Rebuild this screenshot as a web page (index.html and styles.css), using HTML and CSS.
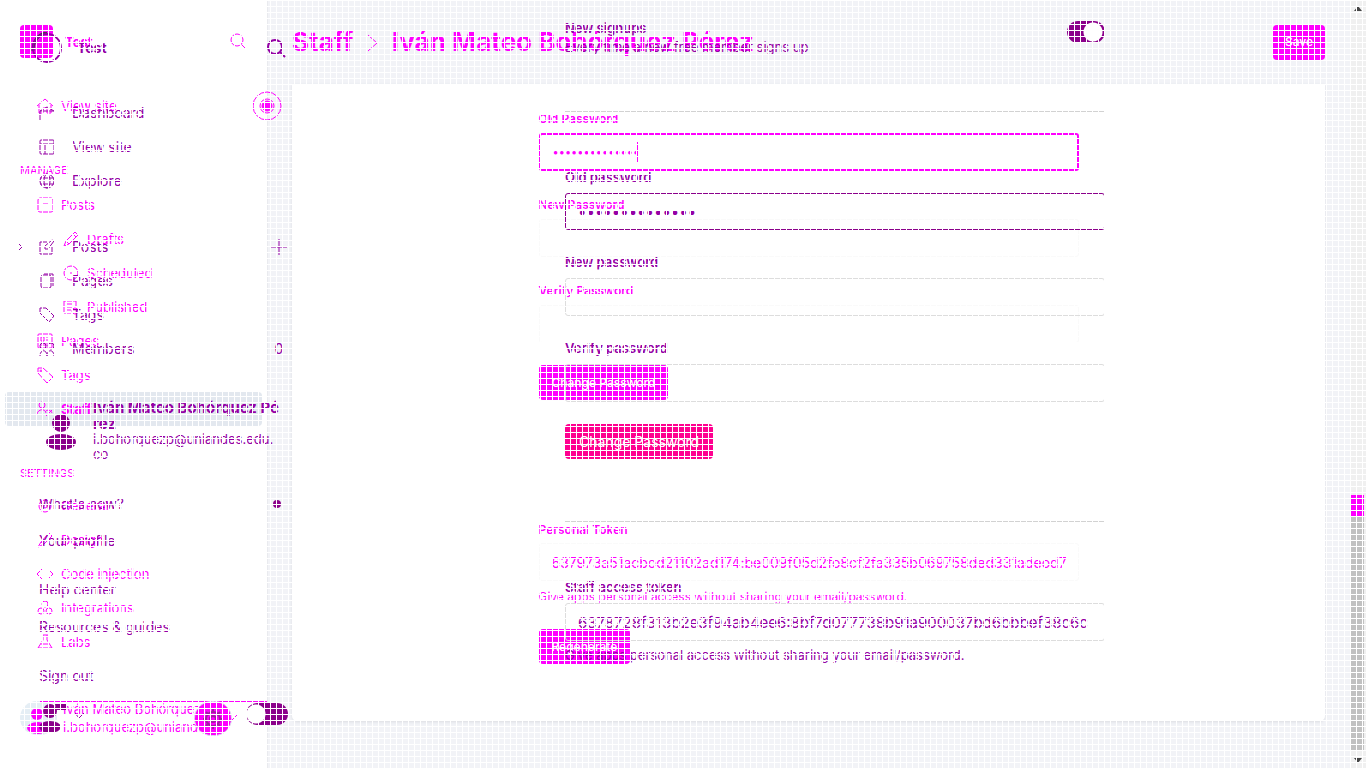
FILE: index.html
```
<!DOCTYPE html>
<html lang="en">
<head>
<meta charset="utf-8">
<title>Staff – Iván Mateo Bohórquez Pérez</title>
<link rel="stylesheet" href="styles.css">
</head>
<body>
<div class="stage">
  <div class="layer before">
    <aside class="side">
      <div class="brand"><span class="brand-mark"></span><b>Test</b>
        <button class="plain search" aria-label="Search"><svg width="17" height="17" viewBox="0 0 17 17"><circle cx="7" cy="7" r="6"/><path d="M11.500 11.500 16 16"/></svg></button></div>
      <nav class="nav">
        <a href="#" class="item first"><svg class="ic" viewBox="0 0 16 16"><path d="M0 8 8 1l8 7M2 7v8h4v-5h4v5h4V7"/></svg>View site<svg class="globe" viewBox="0 0 30 30"><circle cx="15" cy="15" r="14"/><circle class="fill" cx="15" cy="15" r="5"/><circle cx="15" cy="15" r="7"/></svg></a>
        <h2 class="group manage">MANAGE</h2>
        <a href="#" class="item posts"><svg class="ic" viewBox="0 0 16 16"><rect x="1" y="1" width="15" height="14" rx="2"/><path d="M5 7h7"/></svg>Posts</a>
        <a href="#" class="item sub"><svg class="ic" viewBox="0 0 16 16"><path d="m1 15 2-5 9-9 3 3-9 9zM10 3l3 3M3 10l3 3"/></svg>Drafts</a>
        <a href="#" class="item sub"><svg class="ic" viewBox="0 0 16 16"><circle cx="8" cy="8" r="7"/><path d="M7 8h2"/></svg>Scheduled</a>
        <a href="#" class="item sub"><svg class="ic" viewBox="0 0 16 16"><path d="M13 8V2H1v12h7M4 5h6M4 8h5M4 11h4"/><circle cx="12" cy="12" r="3"/></svg>Published</a>
        <a href="#" class="item"><svg class="ic" viewBox="0 0 16 16"><rect x="1" y="1" width="14" height="14" rx="1"/><path d="M4 4h3v4H4zM9 4h3M9 7h3M4 10h8M4 12h8"/></svg>Pages</a>
        <a href="#" class="item"><svg class="ic" viewBox="0 0 16 16"><path d="M1 1h5l10 9-6 6L1 6z"/><circle cx="4" cy="4" r="1"/></svg>Tags</a>
        <a href="#" class="item active"><svg class="ic" viewBox="0 0 16 16"><circle cx="5" cy="4" r="3"/><path d="M0 13c1-5 8-6 9-1M8 11c2-3 6-2 7 1M9 15l6-6"/></svg>Staff</a>
        <h2 class="group settings">SETTINGS</h2>
        <a href="#" class="item"><svg class="ic" viewBox="0 0 16 16"><circle cx="8" cy="8" r="6"/><circle cx="8" cy="8" r="2"/></svg>General</a>
        <a href="#" class="item"><svg class="ic" viewBox="0 0 16 16"><path d="m1 15 3-5 8-9 3 3-8 8zM4 10l3 3"/></svg>Design</a>
        <a href="#" class="item"><svg class="ic" viewBox="0 0 16 16"><path d="M5 3 0 8l5 5M11 3l5 5-5 5"/></svg>Code injection</a>
        <a href="#" class="item"><svg class="ic" viewBox="0 0 16 16"><circle cx="8" cy="4" r="3"/><circle cx="4" cy="11" r="3"/><circle cx="12" cy="11" r="3"/></svg>Integrations</a>
        <a href="#" class="item"><svg class="ic" viewBox="0 0 16 16"><path d="M5 1h6M6 1v5L1 14h14l-5-8V1M4 10h8"/></svg>Labs</a>
      </nav>
      <div class="account">
        <span class="avatar"><svg width="36" height="33" viewBox="0 0 36 33"><circle cx="17" cy="13" r="6"/><ellipse cx="18" cy="27" rx="11" ry="6"/></svg></span>
        <div class="who">Iván Mateo Bohórquez<br>i.bohorquezp@uniandes.e</div>
        <button class="gear" aria-label="Settings"><svg width="20" height="20" viewBox="0 0 20 20"><circle cx="10" cy="10" r="7"/><circle cx="10" cy="10" r="3"/><path d="M10 0v4M10 16v4M0 10h4M16 10h4M3 3l3 3M14 14l3 3M17 3l-3 3M6 14l-3 3"/></svg></button>
        <svg class="down" width="12" height="8" viewBox="0 0 12 8"><path d="m1 1 4 5 5-5"/></svg>
      </div>
    </aside>
    <main class="main">
      <header class="top"><h1>Staff <svg width="14" height="20" viewBox="0 0 14 20"><path d="m2 2 9 8-9 8"/></svg> Iván Mateo Bohórquez Pérez</h1><button class="btn save">Save</button></header>
      <section class="panel"><form class="form">
        <label for="a1">Old Password</label>
        <div class="focus"><input class="field on" id="a1" type="password" value="abcdefghijklmn"><i class="caret"></i></div>
        <label for="a2">New Password</label><input class="field" id="a2" type="password">
        <label for="a3">Verify Password</label><input class="field" id="a3" type="password">
        <button type="button" class="btn">Change Password</button>
        <label for="a4" class="token">Personal Token</label><input class="field" id="a4" value="637973a51acbod21102ad174:be009f05d2fo8cf2fa335b069758ded331adeod72">
        <p>Give apps personal access without sharing your email/password.</p>
        <button type="button" class="btn">Regenerate</button>
      </form></section>
    </main>
    <div class="scroll"><svg width="16" height="16" viewBox="0 0 16 16"><path d="m4 11 4-5 4 5z"/></svg><i class="thumb"></i><svg width="16" height="16" viewBox="0 0 16 16"><path d="m4 6 4 5 4-5z"/></svg></div>
  </div>

  <div class="layer after">
    <aside class="side">
      <div class="brand"><svg width="32" height="32" viewBox="0 0 32 32"><path class="dark" d="M2 19C2 9 7 2 16 1" /><circle cx="16" cy="16" r="14"/></svg><b>Test</b>
        <button class="plain search" aria-label="Search members"><svg width="19" height="19" viewBox="0 0 19 19"><circle cx="8" cy="8" r="7"/><path d="m13 13 5 5"/></svg></button></div>
      <nav class="nav">
        <a href="#" class="item"><svg class="ic" viewBox="0 0 16 16"><path d="M1 15V6l7-4 7 4M1 6h14"/></svg>Dashboard</a>
        <a href="#" class="item"><svg class="ic" viewBox="0 0 16 16"><rect x="1" y="1" width="14" height="14" rx="1"/><path d="M1 5h14M6 5v10"/></svg>View site</a>
        <a href="#" class="item"><svg class="ic" viewBox="0 0 16 16"><circle cx="8" cy="8" r="7"/><ellipse cx="8" cy="8" rx="3" ry="7"/><path d="M1 5h14M1 11h14"/></svg>Explore</a>
        <a href="#" class="item gap"><svg class="chev" viewBox="0 0 6 8"><path d="m1 1 3 3-3 3"/></svg><svg class="ic" viewBox="0 0 16 16"><path d="M13 8v7H1V3h7M6 7v3h3l6-8-2-1z"/></svg>Posts<svg class="end" viewBox="0 0 16 16"><path d="M8 0v16M0 8h16"/></svg></a>
        <a href="#" class="item"><svg class="ic" viewBox="0 0 16 16"><rect x="2" y="2" width="10" height="13" rx="2"/><path d="M5 1h9v12"/></svg>Pages</a>
        <a href="#" class="item"><svg class="ic" viewBox="0 0 16 16"><path d="M1 1h6l8 8-5 6-9-9z"/></svg>Tags</a>
        <a href="#" class="item"><svg class="ic" viewBox="0 0 16 16"><circle cx="4" cy="5" r="3"/><circle cx="12" cy="5" r="3"/><path d="M1 15c0-7 7-7 7 0 0-7 7-7 7 0"/></svg>Members<span class="end">0</span></a>
      </nav>
      <div class="profile"><svg width="32" height="37" viewBox="0 0 32 37"><circle cx="16" cy="9" r="9"/><ellipse cx="16" cy="28" rx="15" ry="8"/></svg><div><b>Iván Mateo Bohórquez Pé<br>rez</b><span>i.bohorquezp@uniandes.edu.<br>co</span></div></div>
      <nav class="menu"><a href="#">What's new?<i class="dot"></i></a><a href="#">Your profile</a><a href="#" class="sep">Help center</a><a href="#">Resources &amp; guides</a><a href="#" class="sep">Sign out</a></nav>
      <div class="account"><svg class="me" width="30" height="32" viewBox="0 0 30 32"><circle cx="12" cy="9" r="7"/><path d="M17 2h12v6H18z"/><ellipse cx="12" cy="25" rx="11" ry="6"/></svg><svg class="down" width="12" height="8" viewBox="0 0 12 8"><path d="m1 1 4 5 5-5"/></svg><input type="checkbox" class="switch night" aria-label="Night shift"></div>
    </aside>
    <main class="main"><form class="form">
      <div class="row"><div><label for="b0">New signups</label><p>Every time a new free member signs up</p></div><input id="b0" type="checkbox" class="switch" checked></div>
      <div class="rule"></div>
      <label for="b1">Old password</label><input class="field on" id="b1" type="password" value="abcdefghijklmn">
      <label for="b2">New password</label><input class="field" id="b2" type="password">
      <label for="b3">Verify password</label><input class="field" id="b3" type="password">
      <button type="button" class="btn">Change Password</button>
      <div class="rule"></div>
      <label for="b4">Staff access token</label><input class="field" id="b4" value="6378728f313b2e3f94ab4ee6:8bf7d077738b91a900037bd6bbbef38c6c">
      <p class="hint">Give apps personal access without sharing your email/password.</p>
    </form></main>
    <div class="gutter"></div>
  </div>
</div>
</body>
</html>
```

FILE: styles.css
```
* { box-sizing: border-box; }
body { margin: 0; font: 14px/20px Inter, "Liberation Sans", sans-serif; }
h1, h2, p { margin: 0; font-weight: 400; }
a { color: inherit; text-decoration: none; }
button, input { font: inherit; color: inherit; }
svg { fill: none; stroke: currentColor; stroke-width: 1; flex: none; }
.plain { border: 0; padding: 0; background: none; display: flex; }
.ic { width: 16px; height: 16px; }

.stage { position: relative; height: 100vh; overflow: hidden; background: #f2f3f7; }
/* white mesh laid over both layers */
.stage::after {
  content: ""; position: absolute; inset: 0; pointer-events: none; z-index: 3;
  background:
    repeating-linear-gradient(90deg, #fff 0 1px, transparent 1px 6px),
    repeating-linear-gradient(#fff 0 1px, transparent 1px 6px);
}
.layer { display: flex; height: 100%; }
.side { display: flex; flex-direction: column; flex: none; }
.main { flex: 1; min-width: 0; }
.brand { display: flex; align-items: center; }
.search { margin-left: auto; }
.item { display: flex; align-items: center; height: 34px; }
.form { width: 540px; margin: 0 auto; display: flex; flex-direction: column; }
.field { width: 100%; height: 38px; padding: 0 12px; border: 1px solid #fafafa; border-radius: 3px; background: none; outline: 0; }
.btn { align-self: flex-start; height: 35px; border: 0; border-radius: 4px; color: #fff; }

.before { color: #f0f; }
.before .side { width: 268px; background: #fff; border-right: 1px solid #e9eaee; }
.before .brand { padding: 25px 20px 0 20px; gap: 12px; }
.before .brand b { line-height: 32px; font-size: 13px; }
.brand-mark { width: 33px; height: 33px; border-radius: 4px; background: currentColor; }
.before .nav { padding-top: 31px; }
.before .item { position: relative; gap: 8px; padding-left: 32px; margin: 0 5px; font-size: 13px; }
.before .sub { padding-left: 58px; }
.globe { position: absolute; right: -20px; width: 30px; height: 30px; }
.globe .fill { fill: currentColor; }
.group { padding-left: 20px; font-size: 11px; line-height: 20px; }
.manage { margin-top: 37px; padding-bottom: 8px; }
.settings { margin: 37px 0 6px; }
.active { background: #e3e8ef; border-radius: 4px; font-weight: 700; }
.before .account { position: relative; display: flex; align-items: center; gap: 6px; margin-top: auto; margin-left: 20px; margin-bottom: 32px; height: 36px; }
.before .account::before { content: ""; position: absolute; left: 20px; right: 0; top: 1px; height: 1px; background: #f0f; }
.avatar { width: 37px; height: 34px; border-radius: 17px; background: #e5eef5; overflow: hidden; }
.avatar svg { fill: currentColor; stroke: none; }
.who { width: 158px; white-space: nowrap; font-size: 13px; line-height: 18px; }
.gear { position: absolute; left: 174px; top: 1px; width: 38px; height: 35px; border: 1px solid #dde; border-radius: 18px; padding: 0; background: #f0f; color: #a020a0; display: grid; place-items: center; }
.gear svg { stroke-width: 2; }

.before .main { display: flex; flex-direction: column; padding: 0 25px 47px 24px; }
.top { display: flex; align-items: center; justify-content: space-between; height: 84px; flex: none; }
h1 { font-size: 26px; line-height: 34px; font-weight: 700; white-space: nowrap; }
h1 svg { margin: 0 6px; vertical-align: -2px; }
.before .btn { background: #f0f; padding: 0 13px; font-size: 12px; font-weight: 500; }
.before .save { align-self: center; padding: 0 12px; }
.panel { flex: 1; min-height: 0; background: #fff; border-radius: 0 0 5px 5px; box-shadow: 0 1px 3px #dcdde2; }
.before .form { padding-top: 25px; }
.before label { font-size: 12px; font-weight: 600; line-height: 20px; margin-bottom: 4px; }
.before .field { margin-bottom: 24px; }
.before .on { border: 2px solid #f0f; font-size: 11px; }
.focus { position: relative; }
.caret { position: absolute; left: 98px; top: 9px; width: 1px; height: 20px; background: #f0f; }
.before #a3 { margin-bottom: 22px; }
.before .token { margin-top: 120px; margin-bottom: 3px; }
.before #a4 { margin-bottom: 6px; }
.before p { font-size: 12px; margin-bottom: 22px; }

.scroll { display: flex; flex-direction: column; justify-content: space-between; width: 16px; background: #f0f0f0; }
.scroll svg { fill: #444; stroke: none; }
.thumb { margin: auto 2px 2px 1px; height: 255px; background: linear-gradient(#f0f 0 21px, #c1c1c1 21px); }

.after { position: absolute; inset: 0; color: #9500a5; }
.after .side { width: 320px; }
.after svg { stroke-width: 2; }
.after .ic { stroke-width: 1; }
.after .brand { padding: 32px 34px 0 31px; gap: 14px; height: 64px; }
.after .dark { stroke: #444; stroke-width: 3; }
.after .nav { padding-top: 32px; }
.after .item { position: relative; padding: 0 33px 0 39px; gap: 17px; }
.after .item .end { margin-left: auto; width: 16px; text-align: center; }
.after svg.end, .after .chev { height: 16px; stroke-width: 1; }
.chev { position: absolute; left: 18px; width: 6px; }
.after .gap { margin-top: 32px; }
.profile { display: flex; gap: 16px; padding: 34px 0 0 45px; line-height: 16px; }
.profile b { font-size: 15px; white-space: nowrap; }
.profile svg { fill: #8b008b; stroke: none; margin-top: 14px; }
.profile span { display: block; font-size: 13px; line-height: 15px; }
.menu { padding: 23px 39px 0; display: flex; flex-direction: column; }
.menu a { display: flex; justify-content: space-between; align-items: center; height: 37px; }
.menu .sep { margin-top: 12px; }
.dot { width: 8px; height: 8px; border-radius: 4px; background: #8b008b; }
.after .account { display: flex; padding: 8px 32px 0 38px; }
.me { fill: #8b008b; stroke: none; }
.after .account .down { margin: 10px 0 0 6px; stroke-width: 1; }
.switch { appearance: none; flex: none; width: 38px; height: 22px; margin: 0; border-radius: 11px; background: radial-gradient(circle at 26px 11px, #fff 0 9px, #8b008b 10px); }
.night { width: 42px; margin: 1px 0 0 auto; background: radial-gradient(circle at 10px 11px, #fff 0 9px, #8b008b 10px); }

.gutter { width: 16px; }
.row { display: flex; justify-content: space-between; padding-top: 18px; }
.row > .switch { margin-top: 3px; }
.row p { font-size: 13px; line-height: 18px; }
.rule { height: 1px; background: #d2d2d2; margin: 55px 0; }
.after .form label { font-size: 13px; line-height: 20px; font-weight: 600; margin-bottom: 6px; }
.after .form .row label { margin: 0; }
.after .field { height: 38px; border-color: #ddd; margin-bottom: 22px; }
.after .on { height: 37px; border-color: #8b008b; font-size: 15px; }
.after #b4 { font-size: 15px; }
.after .btn { background: #ff0090; padding: 0 14px; }
.after .btn + .rule { margin: 62px 0 55px; }
.after .form #b4 { margin-bottom: 4px; }
.hint { font-size: 13px; }
```
